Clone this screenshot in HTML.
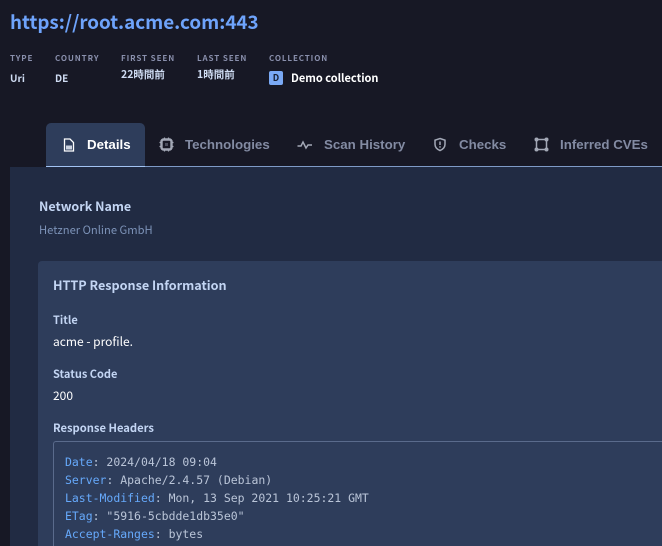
<!DOCTYPE html>
<html><head><meta charset="utf-8">
<style>
html,body{margin:0;padding:0;background:#171825;width:662px;height:546px;overflow:hidden}
body{position:relative;font-family:"Noto Sans CJK JP","Liberation Sans",sans-serif;color:#fff}
.a{position:absolute;white-space:nowrap}
.lbl{font-size:8px;font-weight:700;letter-spacing:.9px;color:#8a90ad;line-height:12px;top:52.500px}
.val{font-size:10px;font-weight:700;color:#cfdcf3;line-height:14px;top:71px}
.tab{font-family:"Liberation Sans",sans-serif;font-weight:700;font-size:13.300px;color:#838ba3;line-height:18px;top:136px}
.k{color:#66a9fb}
.m{position:absolute;left:65px;white-space:pre;font-family:'DejaVu Sans Mono','Liberation Mono',monospace;font-size:11.480px;line-height:18px;color:#bac5d8}
svg{position:absolute;fill:none}
</style></head><body>
<div class="a" style="left:10px;top:7px;font-size:18.800px;font-weight:700;color:#6ea3fb;line-height:30px">https://root.acme.com:443</div>
<div class="a lbl" style="left:10px">TYPE</div>
<div class="a lbl" style="left:55px">COUNTRY</div>
<div class="a lbl" style="left:121px">FIRST SEEN</div>
<div class="a lbl" style="left:197px">LAST SEEN</div>
<div class="a lbl" style="left:269px">COLLECTION</div>
<div class="a val" style="left:10px">Uri</div>
<div class="a val" style="left:55px">DE</div>
<div class="a val" style="left:121px;top:68px;font-size:10.500px">22時間前</div>
<div class="a val" style="left:197px;top:68px;font-size:10.500px">1時間前</div>
<div class="a" style="left:269px;top:71px;width:14px;height:14px;border-radius:2px;background:#7aa9f5;color:#172033;font-size:9px;font-weight:700;line-height:14px;text-align:center">D</div>
<div class="a" style="left:291px;top:70px;font-size:11px;font-weight:700;color:#fff;line-height:16px">Demo collection</div>

<div class="a" style="left:46px;top:123px;width:99px;height:43px;background:#2e3d5b;border-radius:5px 5px 0 0"></div>
<div class="a" style="left:46px;top:166px;width:616px;height:1px;background:#7e9ac6"></div>
<div class="a" style="left:46px;top:166px;width:99px;height:1px;background:#a3c4f3"></div>
<div class="a" style="left:10px;top:167px;width:652px;height:379px;background:#212b43"></div>

<svg style="left:62px;top:138px" width="14" height="14" viewBox="0 0 14 14"><path d="M2.500 1h5.500l3.500 3.500v8.500h-9z" stroke="#fff" stroke-width="1.300"/><path d="M4 7.500h6v4H4z" fill="#cbd2e0"/></svg>
<div class="a tab" style="left:87px;color:#fff">Details</div>
<svg style="left:159px;top:137px" width="15" height="15" viewBox="0 0 15 15"><rect x="2.500" y="2.500" width="10" height="10" rx="2" stroke="#a3a8b6" stroke-width="2.400"/><rect x="6" y="6" width="3" height="3" fill="#4a4d5c"/><path d="M5.500 0.500v2M9.500 0.500v2M5.500 12.500v2M9.500 12.500v2M.5 5.500h2M.5 9.500h2M12.500 5.500h2M12.500 9.500h2" stroke="#a3a8b6" stroke-width="1.200"/></svg>
<div class="a tab" style="left:185px">Technologies</div>
<svg style="left:297px;top:138px" width="16" height="14" viewBox="0 0 16 14"><path d="M0.500 8h3.500l2-4 3 6 2-3h4" stroke="#a3a8b6" stroke-width="1.500"/></svg>
<div class="a tab" style="left:324px">Scan History</div>
<svg style="left:433px;top:137px" width="14" height="15" viewBox="0 0 14 15"><path d="M7 1.500l5 1.700v4c0 3-2 5-5 6.300-3-1.300-5-3.300-5-6.300v-4z" stroke="#a3a8b6" stroke-width="1.500"/><path d="M7 4.500v3.500M7 9.300v1.300" stroke="#a3a8b6" stroke-width="1.500"/></svg>
<div class="a tab" style="left:459px">Checks</div>
<svg style="left:534px;top:137px" width="15" height="15" viewBox="0 0 15 15"><path d="M2.500 2.500h10v10h-10z" stroke="#a3a8b6" stroke-width="1.500"/><g fill="#a3a8b6"><circle cx="2.500" cy="2.500" r="2"/><circle cx="12.500" cy="2.500" r="2"/><circle cx="2.500" cy="12.500" r="2"/><circle cx="12.500" cy="12.500" r="2"/></g></svg>
<div class="a tab" style="left:560px">Inferred CVEs</div>

<div class="a" style="left:39px;top:196px;font-size:12.500px;font-weight:700;color:#c3d5f3;line-height:19px">Network Name</div>
<div class="a" style="left:39px;top:222px;font-size:11.200px;color:#7d93b8;line-height:16px">Hetzner Online GmbH</div>

<div class="a" style="left:38px;top:261px;width:624px;height:285px;background:#2e3d5b;border-radius:4px 0 0 0"></div>
<div class="a" style="left:53px;top:275px;font-size:12.600px;font-weight:700;color:#c3d5f3;line-height:19px">HTTP Response Information</div>
<div class="a" style="left:53px;top:312px;font-size:11px;font-weight:700;color:#c3d5f3;line-height:16px">Title</div>
<div class="a" style="left:53px;top:333px;font-size:12px;color:#fff;line-height:17px">acme - profile.</div>
<div class="a" style="left:53px;top:366px;font-size:11px;font-weight:700;color:#c3d5f3;line-height:16px">Status Code</div>
<div class="a" style="left:53px;top:387px;font-size:12px;color:#fff;line-height:17px">200</div>
<div class="a" style="left:53px;top:420px;font-size:11.200px;font-weight:700;color:#c3d5f3;line-height:16px">Response Headers</div>
<div class="a" style="left:53px;top:441px;width:609px;height:105px;border:solid #5a6b8c;border-width:1px 0 0 1px;border-radius:3px 0 0 0;box-sizing:border-box"></div>
<div class="m" style="top:453px"><span class="k">Date</span>: 2024/04/18 09:04</div>
<div class="m" style="top:471px"><span class="k">Server</span>: Apache/2.4.57 (Debian)</div>
<div class="m" style="top:489px"><span class="k">Last-Modified</span>: Mon, 13 Sep 2021 10:25:21 GMT</div>
<div class="m" style="top:507px"><span class="k">ETag</span>: "5916-5cbdde1db35e0"</div>
<div class="m" style="top:525px"><span class="k">Accept-Ranges</span>: bytes</div>
</body></html>
